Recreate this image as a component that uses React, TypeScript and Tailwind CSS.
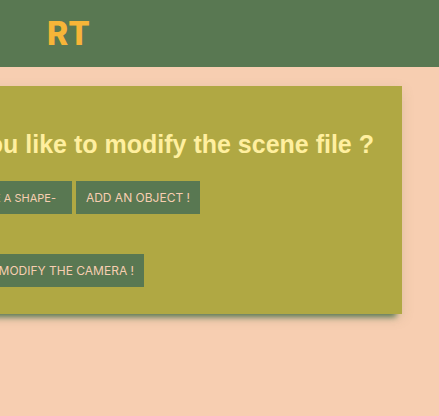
const buttonClass =
  "h-[33px] shrink-0 whitespace-nowrap bg-[#597852] px-[10px] font-['Inter',sans-serif] text-[12px] leading-4 text-[#f7ceb1]";

function Header() {
  return (
    <header className="flex h-[67px] items-center bg-[#597852] px-[47px]">
      <a
        href="#"
        className="font-['Inter',sans-serif] text-[32px] leading-10 font-extrabold text-[#f7b538]"
      >
        RT
      </a>
    </header>
  );
}

function SceneEditor() {
  return (
    <section className="-ml-8 mr-[37px] bg-[#b0a843] pt-10 pb-[27px] shadow-[0_9px_6px_-6px_#597852,0_4px_12px_rgba(89,120,82,0.15)]">
      <div className="flex justify-end overflow-hidden pr-7">
        <h1 className="shrink-0 font-['Liberation_Sans',Arial,sans-serif] text-[25px] leading-9 font-bold whitespace-nowrap text-[#ffef9f]">
          you like to modify the scene file ?
        </h1>
      </div>
      <div className="mt-[19px] flex justify-end gap-1 overflow-hidden pr-[202px]">
        <select
          aria-label="Shape"
          className="h-[33px] shrink-0 appearance-none bg-[#597852] pt-px pr-[15px] pl-[10px] font-['Inter',sans-serif] text-[11px] text-[#f7ceb1]"
        >
          <option>-CHOOSE A SHAPE-</option>
        </select>
        <button type="button" className={buttonClass}>
          ADD AN OBJECT !
        </button>
      </div>
      <div className="mt-10 flex justify-end overflow-hidden pr-[258px]">
        <button type="button" className={buttonClass}>
          MODIFY THE CAMERA !
        </button>
      </div>
    </section>
  );
}

export default function App() {
  return (
    <div className="min-h-screen overflow-hidden bg-[#f7ceb1]">
      <Header />
      <main className="pt-[19px] pb-8">
        <SceneEditor />
      </main>
    </div>
  );
}
